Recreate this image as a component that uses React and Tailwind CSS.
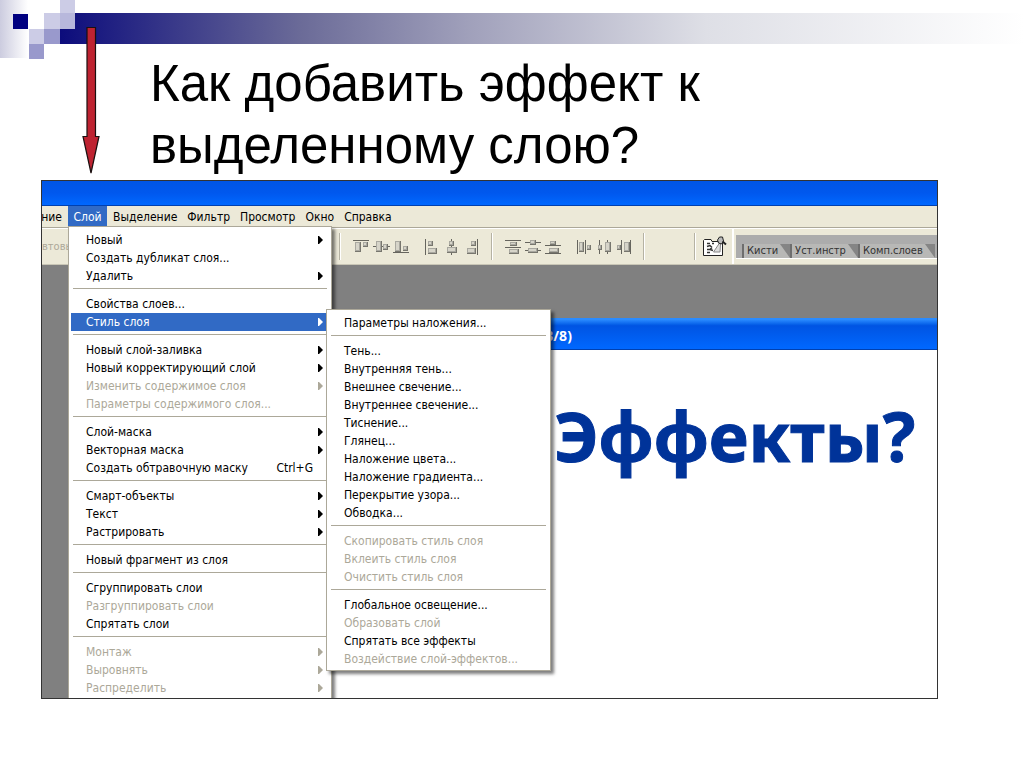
const layerMenu = [
  [
    { label: 'Новый', arrow: true },
    { label: 'Создать дубликат слоя...' },
    { label: 'Удалить', arrow: true },
  ],
  [{ label: 'Свойства слоев...' }, { label: 'Стиль слоя', arrow: true, open: true }],
  [
    { label: 'Новый слой-заливка', arrow: true },
    { label: 'Новый корректирующий слой', arrow: true },
    { label: 'Изменить содержимое слоя', arrow: true, disabled: true },
    { label: 'Параметры содержимого слоя...', disabled: true },
  ],
  [
    { label: 'Слой-маска', arrow: true },
    { label: 'Векторная маска', arrow: true },
    { label: 'Создать обтравочную маску', shortcut: 'Ctrl+G' },
  ],
  [
    { label: 'Смарт-объекты', arrow: true },
    { label: 'Текст', arrow: true },
    { label: 'Растрировать', arrow: true },
  ],
  [{ label: 'Новый фрагмент из слоя' }],
  [
    { label: 'Сгруппировать слои' },
    { label: 'Разгруппировать слои', disabled: true },
    { label: 'Спрятать слои' },
  ],
  [
    { label: 'Монтаж', arrow: true, disabled: true },
    { label: 'Выровнять', arrow: true, disabled: true },
    { label: 'Распределить', arrow: true, disabled: true },
  ],
]

const styleMenu = [
  [{ label: 'Параметры наложения...' }],
  [
    { label: 'Тень...' },
    { label: 'Внутренняя тень...' },
    { label: 'Внешнее свечение...' },
    { label: 'Внутреннее свечение...' },
    { label: 'Тиснение...' },
    { label: 'Глянец...' },
    { label: 'Наложение цвета...' },
    { label: 'Наложение градиента...' },
    { label: 'Перекрытие узора...' },
    { label: 'Обводка...' },
  ],
  [
    { label: 'Скопировать стиль слоя', disabled: true },
    { label: 'Вклеить стиль слоя', disabled: true },
    { label: 'Очистить стиль слоя', disabled: true },
  ],
  [
    { label: 'Глобальное освещение...' },
    { label: 'Образовать слой', disabled: true },
    { label: 'Спрятать все эффекты' },
    { label: 'Воздействие слой-эффектов...', disabled: true },
  ],
]

// l = guide lines, b = boxes, as [x, y, w, h] on a 16x16 grid
const alignIcons = [
  { name: 'top', l: [[0, 1, 16, 1]], b: [[2, 3, 5, 9], [10, 3, 4, 4]] },
  { name: 'middle', l: [[0, 7, 17, 1]], b: [[3, 2, 5, 10], [10, 5, 4, 5]] },
  { name: 'bottom', l: [[0, 13, 16, 1]], b: [[2, 2, 5, 10], [10, 7, 4, 4]] },
]
const edgeIcons = [
  { name: 'left', l: [[1, 0, 1, 16]], b: [[4, 2, 4, 4], [4, 9, 8, 5]] },
  { name: 'center', l: [[7, 0, 1, 16]], b: [[5, 2, 4, 4], [3, 8, 9, 5]] },
  { name: 'right', l: [[13, 0, 1, 16]], b: [[7, 2, 4, 4], [3, 9, 8, 5]] },
]
const spreadIcons = [
  { name: 'rows top', l: [[0, 1, 16, 1], [0, 8, 16, 1]], b: [[5, 3, 6, 3], [4, 10, 9, 4]] },
  { name: 'rows middle', l: [[0, 3, 16, 1], [0, 11, 16, 1]], b: [[5, 1, 5, 4], [3, 9, 9, 4]] },
  { name: 'rows bottom', l: [[0, 6, 16, 1], [0, 14, 16, 1]], b: [[5, 2, 5, 3], [4, 9, 9, 4]] },
]
const columnIcons = [
  { name: 'columns left', l: [[1, 1, 1, 14], [9, 1, 1, 14]], b: [[3, 3, 4, 9], [11, 6, 3, 4]] },
  { name: 'columns center', l: [[3, 1, 1, 14], [11, 1, 1, 14]], b: [[2, 6, 3, 4], [9, 3, 5, 9]] },
  { name: 'columns right', l: [[5, 1, 1, 14], [14, 1, 1, 14]], b: [[1, 6, 3, 4], [8, 3, 5, 9]] },
]

function ToolIcon({ icon }) {
  return (
    <button type="button" aria-label={icon.name} className="w-5 h-4 flex">
      <svg width="18" height="16" viewBox="0 0 18 16" shapeRendering="crispEdges">
        {icon.l.map((r, i) => (
          <rect key={i} x={r[0]} y={r[1]} width={r[2]} height={r[3]} fill="#66655e" />
        ))}
        {icon.b.map((r, i) => (
          <g key={i}>
            <rect x={r[0]} y={r[1]} width={r[2] + 1} height={r[3] + 1} fill="#77766e" />
            <rect x={r[0]} y={r[1]} width={r[2]} height={r[3]} fill="#a9a8a0" />
            <rect x={r[0] + 1} y={r[1] + 1} width={r[2] - 2} height={r[3] - 2} fill="#d6d4c9" />
          </g>
        ))}
      </svg>
    </button>
  )
}

function ToolGroup({ icons }) {
  return (
    <div className="flex">
      {icons.map((icon) => (
        <ToolIcon key={icon.name} icon={icon} />
      ))}
    </div>
  )
}

function Divider() {
  return <div className="w-[2px] shrink-0 self-stretch my-1 border-l border-[#b5b2a3] bg-white" />
}

function MenuItem({ item }) {
  let color = 'text-black'
  if (item.disabled) color = 'text-[#aca899]'
  if (item.open) color = 'text-white bg-[#316ac5]'

  return (
    <li className="relative">
      <button
        type="button"
        disabled={item.disabled}
        className={`flex w-full h-[18px] items-center justify-between pl-[15px] pr-[6px] whitespace-nowrap ${color}`}
      >
        <span>{item.label}</span>
        {item.shortcut && <span className="pr-[10px]">{item.shortcut}</span>}
        {item.arrow && (
          <svg width="5" height="8" viewBox="0 0 5 8" fill="currentColor">
            <path d="M0 0h1l4 4-4 4H0z" />
          </svg>
        )}
      </button>
      {item.open && (
        <div className="absolute z-10 left-[255px] top-[-4px] w-[225px]">
          <Menu groups={styleMenu} />
        </div>
      )}
    </li>
  )
}

function Menu({ groups }) {
  return (
    <div className="bg-white border border-[#aca899] px-[2px] pt-1 pb-[2px] shadow-[3px_3px_3px_rgba(0,0,0,0.5)]">
      {groups.map((group, i) => (
        <div key={i}>
          {i > 0 && <hr className="mx-[2px] mt-[3px] mb-[6px] border-[#aca899]" />}
          <ul>
            {group.map((item) => (
              <MenuItem key={item.label} item={item} />
            ))}
          </ul>
        </div>
      ))}
    </div>
  )
}

function MenuBar() {
  return (
    <nav className="flex h-[22px] shrink-0 items-stretch bg-[#ece9d8] border-b border-[#aca899]">
      <button type="button" className="w-[26px] flex items-center justify-end pr-[6px]">ние</button>
      <div className="relative z-10 flex">
        <button type="button" className="w-[39px] bg-[#316ac5] text-white">Слой</button>
        <div className="absolute left-0 top-[20px] w-[264px]">
          <Menu groups={layerMenu} />
        </div>
      </div>
      <div className="flex items-center gap-[10px] pl-[6px]">
        <button type="button">Выделение</button>
        <button type="button">Фильтр</button>
        <button type="button">Просмотр</button>
        <button type="button">Окно</button>
        <button type="button">Справка</button>
      </div>
    </nav>
  )
}

function PaletteTab({ children }) {
  return (
    <button type="button" className="flex h-[14px] shrink-0 items-end bg-[#b8b8b6] border-l-2 border-[#6e6e6e] pl-[3px] text-[11px] leading-[14px] text-[#333]">
      {children}
      <svg width="10" height="14" viewBox="0 0 10 14" className="ml-[2px]">
        <path d="M0 0h10v14z" fill="#858585" />
      </svg>
    </button>
  )
}

function OptionsBar() {
  return (
    <div className="flex h-[37px] shrink-0 items-center bg-[#ece9d8] border-t border-white border-b border-b-[#c9c6b6] overflow-hidden">
      <span className="w-[297px] shrink-0 text-[#aca899] text-[11px]">втовы</span>
      <Divider />
      <div className="flex gap-[11px] pl-[12px] pr-[7px]">
        <ToolGroup icons={alignIcons} />
        <ToolGroup icons={edgeIcons} />
      </div>
      <Divider />
      <div className="flex gap-[11px] pl-[12px] pr-[7px]">
        <ToolGroup icons={spreadIcons} />
        <ToolGroup icons={columnIcons} />
      </div>
      <Divider />
      <div className="w-[49px] shrink-0" />
      <Divider />
      <button type="button" aria-label="file browser" className="w-[36px] shrink-0 flex justify-center">
        <svg width="25" height="21" viewBox="0 0 25 21" fill="none" stroke="#222" strokeWidth="1">
          <path d="M1.500 4.500V19.500H20.500V5.500H10l-1-2H2.500z" fill="#fff" />
          <path d="M5 7.500h3M10 7.500h2M5 10.500l3-1 2 2M5 13.500h3l2-2M8 13.500l3 1M5 16.500h3" stroke="#333" strokeWidth="1.500" />
          <path d="M17.500 7L11.500 16h6.500l.5-8" fill="#ddd" stroke="#888" />
          <path d="M15.500 4l2-3h3l1 4-2 3-3-1z" fill="#bbb" />
          <path d="M20.500 5.500l3.500 3" strokeWidth="2" />
        </svg>
      </button>
      <div className="w-[2px] shrink-0 self-stretch bg-white" />
      <div className="ml-[2px] flex flex-1 h-[24px] items-end overflow-hidden bg-[#acacac] border-b border-white pl-[6px]">
        <PaletteTab>Кисти</PaletteTab>
        <PaletteTab>Уст.инстр</PaletteTab>
        <PaletteTab>Комп.слоев</PaletteTab>
      </div>
    </div>
  )
}

function PhotoshopWindow() {
  return (
    <div className="flex flex-1 min-h-[440px] flex-col overflow-hidden border border-[#333] font-['DejaVu_Sans_Condensed','DejaVu_Sans',sans-serif] text-[12px] leading-[18px]">
      <div className="h-[25px] shrink-0 bg-linear-to-b from-[#0055e5] via-[#0058ee] to-[#0068ff] border-b border-[#0040b0]" />
      <MenuBar />
      <OptionsBar />
      <div className="flex flex-1 flex-col bg-[#808080] pt-[53px] pl-[285px]">
        <div className="h-[32px] shrink-0 flex items-center bg-linear-to-b from-[#2a8bff] from-5% via-[#0054e3] via-25% to-[#0068ff] border-b border-[#0040b0] pl-[217px] pt-1 font-['Noto_Sans',sans-serif] text-[14px] font-bold text-white">
          B/8)
        </div>
        <div className="flex-1 bg-white pl-[227px] pt-[40px]">
          <p className="font-['Noto_Sans',sans-serif] text-[68px] leading-[92px] font-bold text-[#003399] whitespace-nowrap [-webkit-text-stroke:1px_#003399]">Эффекты?</p>
        </div>
      </div>
    </div>
  )
}

function Corner() {
  return (
    <svg className="absolute left-0 top-0" width="76" height="60" viewBox="0 0 76 60" shapeRendering="crispEdges">
      <defs>
        <linearGradient id="fade">
          <stop offset="0" stopColor="#ccccdf" />
          <stop offset="1" stopColor="#fff" />
        </linearGradient>
      </defs>
      <path d="M0 0h75v28H60v31H0z" fill="#fff" />
      <path d="M0 0h28v58H0z" fill="url(#fade)" />
      <path d="M13 14h15v15H13z" fill="#000080" />
      <path d="M60 0h15v13H60zM44 13h16v16H44zM29 29h15v15H29z" fill="#ccccE6" />
      <path d="M60 13h15v16H60z" fill="#b8b8dc" />
      <path d="M44 29h16v15H44zM29 44h15v15H29z" fill="#9999cc" />
    </svg>
  )
}

function Arrow() {
  return (
    <svg className="absolute left-[82px] top-[26px] z-20" width="18" height="149" viewBox="0 0 18 149">
      <path d="M5 1.500h8.500V110.500H17L9 147 1 110.500h4z" fill="#be2331" stroke="#1a1010" strokeWidth="1.200" />
    </svg>
  )
}

export default function App() {
  return (
    <main className="relative flex min-h-screen flex-col bg-white">
      <div className="mt-[13px] ml-[60px] h-[31px] shrink-0 bg-[linear-gradient(90deg,#0c0c7c,#6b6b98_25%,#9f9fba_42%,#dedfe6_67%,#fff)]" />
      <Corner />
      <Arrow />
      <h1 className="mt-[9px] pl-[150px] pr-[86px] max-w-[860px] font-['Liberation_Sans',sans-serif] text-[51px] leading-[62px] text-black">
        Как добавить эффект к выделенному слою?
      </h1>
      <div className="mt-[3px] mb-[68px] ml-[41px] mr-[86px] flex flex-1 flex-col">
        <PhotoshopWindow />
      </div>
    </main>
  )
}
